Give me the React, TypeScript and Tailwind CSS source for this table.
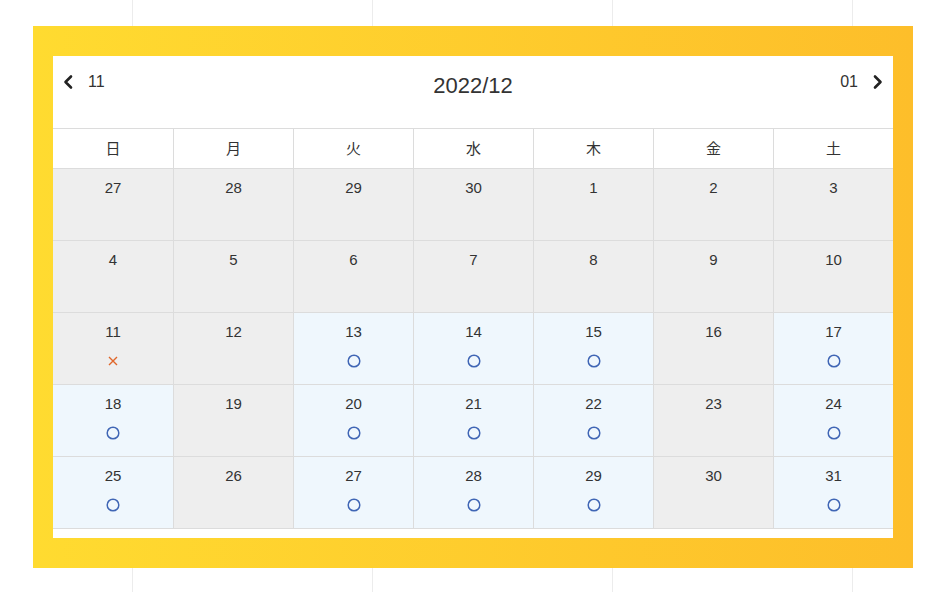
import React from "react";

type Cell = { d: number; s: "g" | "o" | "x" | "b" };

const rows: Cell[][] = [
  [27, 28, 29, 30, 1, 2, 3].map((d) => ({ d, s: "g" as const })),
  [4, 5, 6, 7, 8, 9, 10].map((d) => ({ d, s: "g" as const })),
  [
    { d: 11, s: "x" },
    { d: 12, s: "g" },
    { d: 13, s: "o" },
    { d: 14, s: "o" },
    { d: 15, s: "o" },
    { d: 16, s: "g" },
    { d: 17, s: "o" },
  ],
  [
    { d: 18, s: "o" },
    { d: 19, s: "g" },
    { d: 20, s: "o" },
    { d: 21, s: "o" },
    { d: 22, s: "o" },
    { d: 23, s: "g" },
    { d: 24, s: "o" },
  ],
  [
    { d: 25, s: "o" },
    { d: 26, s: "g" },
    { d: 27, s: "o" },
    { d: 28, s: "o" },
    { d: 29, s: "o" },
    { d: 30, s: "g" },
    { d: 31, s: "o" },
  ],
];

const days = ["日", "月", "火", "水", "木", "金", "土"];

function Chevron({ dir }: { dir: "l" | "r" }) {
  return (
    <svg width="14" height="16" viewBox="0 0 14 16" className="block">
      <path
        d={dir === "l" ? "M10 2.5 L4.5 8 L10 13.5" : "M4 2.5 L9.5 8 L4 13.5"}
        fill="none"
        stroke="#222"
        strokeWidth="2.6"
        strokeLinecap="round"
        strokeLinejoin="round"
      />
    </svg>
  );
}

export default function App() {
  return (
    <div
      className="w-[941px] h-[592px] bg-white pt-[26px] pl-[33px] bg-[repeating-linear-gradient(90deg,transparent_0px,transparent_132px,#ececec_132px,#ececec_133px,transparent_133px,transparent_240px)]"
      style={{ fontFamily: '"Liberation Sans", Arial, "Noto Sans CJK JP", sans-serif' }}
    >
      <div className="w-[880px] h-[542px] bg-gradient-to-r from-[#ffdb30] to-[#fdbe2a] px-[20px] py-[30px]">
        <div className="bg-white h-[482px] pb-[10px] text-[#333]">
          <div className="relative h-[72px] flex items-start justify-between pl-[8px] pr-[8px] pt-[18px]">
            <div className="flex items-center gap-[13px]">
              <Chevron dir="l" />
              <span className="text-[16px] leading-[16px] -mt-[1px]">11</span>
            </div>
            <div className="absolute left-0 right-0 top-[19px] text-center text-[22px] leading-[22px] pointer-events-none">
              2022/12
            </div>
            <div className="flex items-center gap-[13px]">
              <span className="text-[16px] leading-[16px] -mt-[1px]">01</span>
              <Chevron dir="r" />
            </div>
          </div>
          <div className="grid grid-cols-7 border-t border-b border-[#dcdcdc] h-[41px]">
            {days.map((d, i) => (
              <div
                key={d}
                className={`flex items-center justify-center text-[15px] ${i > 0 ? "border-l border-[#dcdcdc]" : ""}`}
                style={{ fontFamily: '"Noto Sans CJK JP", sans-serif' }}
              >
                {d}
              </div>
            ))}
          </div>
          {rows.map((row, ri) => (
            <div key={ri} className="grid grid-cols-7 h-[72px] border-b border-[#dcdcdc]">
              {row.map((c, ci) => (
                <div
                  key={ci}
                  className={`flex flex-col items-center pt-[9px] ${ci > 0 ? "border-l border-[#dcdcdc]" : ""} ${
                    c.s === "o" ? "bg-[#eff7fd]" : "bg-[#eeeeee]"
                  }`}
                >
                  <div className="text-[15px] leading-[20px]">{c.d}</div>
                  <div className="h-[16px] mt-[11px] flex items-center justify-center">
                    {c.s === "o" && (
                      <svg width="14" height="14" viewBox="0 0 14 14">
                        <circle cx="7" cy="7" r="5.8" fill="none" stroke="#4066b5" strokeWidth="1.5" />
                      </svg>
                    )}
                    {c.s === "x" && (
                      <svg width="10" height="10" viewBox="0 0 10 10">
                        <path d="M1 1 L9 9 M9 1 L1 9" stroke="#e0662a" strokeWidth="1.4" />
                      </svg>
                    )}
                  </div>
                </div>
              ))}
            </div>
          ))}
        </div>
      </div>
    </div>
  );
}
